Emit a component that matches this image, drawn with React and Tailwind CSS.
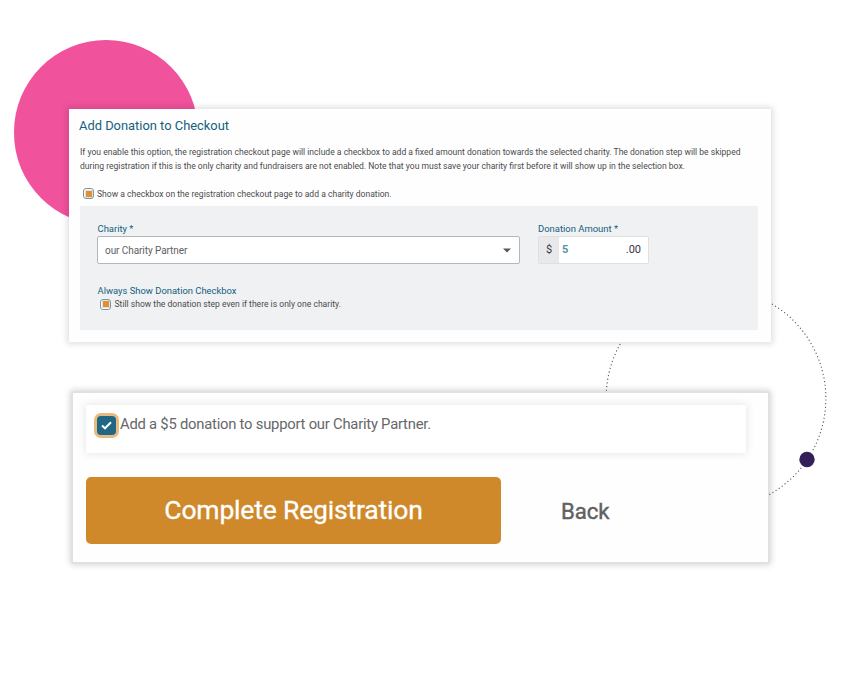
import React, { useState } from 'react';

const SquareCheckbox = ({ checked, onChange }) => (
  <button
    type="button"
    role="checkbox"
    aria-checked={checked}
    onClick={onChange}
    className="flex h-[11px] w-[11px] shrink-0 items-center justify-center rounded-[3px] border border-[#7597ab] bg-white"
  >
    {checked && <span className="h-[6px] w-[6px] bg-[#da923a] outline outline-[#da923a]/30" />}
  </button>
);

const DonationSettings = () => {
  const [showCheckbox, setShowCheckbox] = useState(true);
  const [alwaysShow, setAlwaysShow] = useState(true);

  return (
    <div className="relative ml-[69px] mt-[109px] h-[233px] w-[702px] bg-[#fefefe] px-[11px] shadow-[0_0_6px_2px_rgba(0,0,0,0.13)]">
      <h2 className="h-9 -ml-px pt-[9px] text-[12.9px] leading-4 text-[#14607d]">Add Donation to Checkout</h2>
      <p className="whitespace-nowrap text-[8.57px] leading-[14px] text-[#4b4b4d]">
        If you enable this option, the registration checkout page will include a checkbox to add a fixed amount donation towards the selected charity. The donation step will be skipped
        <br />
        during registration if this is the only charity and fundraisers are not enabled. Note that you must save your charity first before it will show up in the selection box.
      </p>
      <div className="mt-[14px] flex h-[13px] items-center gap-[3px] pl-[3px]">
        <SquareCheckbox checked={showCheckbox} onChange={() => setShowCheckbox(!showCheckbox)} />
        <span className="whitespace-nowrap text-[8.57px] leading-3 text-[#4b4b4d]">
          Show a checkbox on the registration checkout page to add a charity donation.
        </span>
      </div>

      {/* Charity fields */}
      <div className="mt-[6px] h-[124px] w-[678px] bg-[#f0f1f3] px-[17px] pt-[17px]">
        <div className="flex gap-[18px]">
          <div className="w-[423px]">
            <label className="block h-[13px] pl-[0.5px] text-[9.45px] leading-3 text-[#14607d]">Charity *</label>
            <div className="flex h-7 items-center justify-between rounded-[2px] border border-[#b4b6b8] bg-white pl-[7px] pr-[8px]">
              <span className="text-[10px] tracking-[-0.07px] text-[#606164]">our Charity Partner</span>
              <svg width="8" height="5" viewBox="0 0 8 5"><path d="M0 0.5H8L4 4.5Z" fill="#58595b" /></svg>
            </div>
          </div>
          <div className="w-[111px]">
            <label className="block h-[13px] whitespace-nowrap text-[9.45px] leading-3 text-[#14607d]">Donation Amount *</label>
            <div className="flex h-7 items-center rounded-[2px] border border-[#dfe0e1] bg-white text-[11px] text-[#38354a]">
              <span className="flex h-full w-5 items-center justify-center bg-[#e9e9ea]">$</span>
              <span className="pl-[3px] font-bold text-[#5a90a6]">5</span>
              <span className="ml-auto pr-[7px]">.00</span>
            </div>
          </div>
        </div>
        <div className="mt-5 h-[13px] pl-[0.5px] text-[9.42px] leading-[13px] text-[#14607d]">Always Show Donation Checkbox</div>
        <div className="flex h-[14px] items-center gap-[3.5px] pl-[3px]">
          <SquareCheckbox checked={alwaysShow} onChange={() => setAlwaysShow(!alwaysShow)} />
          <span className="whitespace-nowrap text-[8.57px] leading-3 text-[#4b4b4d]">
            Still show the donation step even if there is only one charity.
          </span>
        </div>
      </div>
    </div>
  );
};

const CheckoutPreview = () => (
  <div className="relative ml-[71px] mt-[49px] h-[173px] w-[699px] rounded-[2px] border-2 border-[#e0e2e2] bg-[#fefefe] px-[13px] pt-3 shadow-[0_0_6px_1px_rgba(0,0,0,0.17)]">
    <div className="flex h-12 w-[660px] rounded-[2px] bg-white pl-2 pt-2 shadow-[0_0_9px_1px_rgba(0,0,0,0.09)]">
      <span className="flex h-[25px] w-[25px] shrink-0 items-center justify-center rounded-[7px] border-[3px] border-[#e8b981] bg-[#1f6784]">
        <svg width="11" height="9" viewBox="0 0 11 9" fill="none">
          <path d="M1 4.5L4 7.3L10 1.3" stroke="white" strokeWidth="2" />
        </svg>
      </span>
      <span className="ml-[1px] -mt-px whitespace-nowrap text-[14.8px] leading-6 tracking-[-0.23px] text-[#66676a]">
        Add a $5 donation to support our Charity Partner.
      </span>
    </div>
    <div className="mt-6 flex">
      <button className="h-[67px] w-[415px] rounded-[5px] bg-[#cf892b] pb-[2px] text-[26.5px] tracking-[-0.18px] text-white [-webkit-text-stroke:0.3px_white]">
        Complete Registration
      </button>
      <button className="ml-[60px] pt-[2px] text-[22.2px] text-[#616161] tracking-[-0.1px] [-webkit-text-stroke:0.4px_#616161]">Back</button>
    </div>
  </div>
);

export default function App() {
  return (
    <div className="relative flow-root h-[674px] w-[841px] overflow-hidden bg-white font-['Roboto',sans-serif]">
      <div className="absolute left-[14px] top-10 h-[185px] w-[184px] rounded-full bg-[#f0529c]" />
      <DonationSettings />
      <CheckoutPreview />
      {/* Dotted orbit, its visible arcs end at the card edges */}
      <svg className="pointer-events-none absolute inset-0" width="841" height="674" viewBox="0 0 841 674" fill="none">
        <g stroke="#4c4d50" strokeWidth="1.1" strokeDasharray="1.1 2.6">
          <path d="M772 304A109.8 109.8 0 0 1 769 494.7" />
          <path d="M620.2 344A109.8 109.8 0 0 0 606.4 391" />
        </g>
        <circle cx="807" cy="459.5" r="9" fill="#fff" />
        <circle cx="807" cy="459.5" r="7.7" fill="#33205a" />
      </svg>
    </div>
  );
}
